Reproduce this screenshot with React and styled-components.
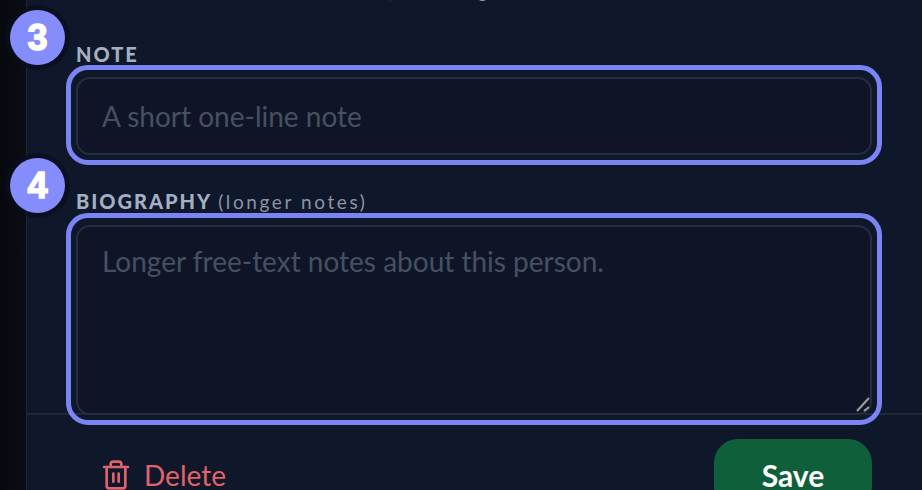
import React from 'react';
import styled, { createGlobalStyle } from 'styled-components';
import { Trash2 } from 'lucide-react';

const GlobalStyle = createGlobalStyle`
  html, body {
    margin: 0;
    height: 100%;
    background: #0f172a;
    overflow: hidden;
  }
  #root {
    height: 100%;
  }
`;

const Page = styled.div`
  display: flex;
  height: 490px;
  overflow: hidden;
  font-family: Lato, "Open Sans", sans-serif;
  color-scheme: dark;
`;

const Backdrop = styled.div`
  width: 26px;
  flex: none;
  background: linear-gradient(90deg, #07090f, #0a0d15);
  border-right: 1px solid #1e2636;
`;

const Panel = styled.main`
  flex: 1;
  display: flex;
  flex-direction: column;
  min-width: 0;
  background: #0f172a;
`;

const Form = styled.div`
  display: flex;
  flex-direction: column;
  padding: 0 50px 0 49px;
`;

const Hint = styled.p`
  margin: -20px 0 0;
  height: 22px;
  font-size: 18px;
  line-height: 22px;
  color: #8a94a6;
  white-space: nowrap;
`;

const Field = styled.div`
  position: relative;
  display: flex;
  flex-direction: column;
  margin-top: ${(p) => p.$top}px;
`;

const Badge = styled.span`
  position: absolute;
  left: -66px;
  top: ${(p) => p.$top}px;
  width: 55px;
  height: 55px;
  border-radius: 50%;
  background: #858cfb;
  box-shadow: 0 0 0 5px rgba(10, 14, 28, 0.7);
  color: #fff;
  font-family: "Liberation Sans", Arial, sans-serif;
  font-size: 36px;
  font-weight: 700;
  -webkit-text-stroke: 1.5px #fff;
  display: flex;
  align-items: center;
  justify-content: center;
  z-index: 2;
`;

const Label = styled.label`
  font-size: 20px;
  line-height: 24px;
  font-weight: 900;
  letter-spacing: 2px;
  color: #a3afc2;
  margin-bottom: ${(p) => p.$gap}px;
`;

const LabelNote = styled.span`
  font-size: 19px;
  font-weight: 400;
  letter-spacing: 2.6px;
  color: #8a94a6;
`;

const Spotlight = styled.div`
  position: relative;
  display: flex;

  &::after {
    content: "";
    position: absolute;
    inset: -12px -10px -10px -10px;
    border: 5px solid #7a85f3;
    border-radius: 22px;
    pointer-events: none;
    z-index: 1;
  }
`;

const controlStyles = `
  width: 100%;
  box-sizing: border-box;
  background: #0f1527;
  border: 2px solid #252d3e;
  border-radius: 14px;
  color: #e2e8f0;
  font-family: Lato, "Open Sans", sans-serif;
  font-size: 28px;
  outline: none;

  &::placeholder {
    color: #465062;
    opacity: 1;
  }
`;

const TextInput = styled.input`
  ${controlStyles}
  height: 78px;
  padding: 0 24px;
`;

const TextArea = styled.textarea`
  ${controlStyles}
  display: block;
  height: 190px;
  padding: 17px 24px;
  resize: none;
`;

const ResizeGrip = styled.svg`
  position: absolute;
  right: 2px;
  bottom: 3px;
  width: 16px;
  height: 16px;
  pointer-events: none;
`;

const Footer = styled.footer`
  display: flex;
  align-items: flex-start;
  justify-content: space-between;
  margin-top: -2px;
  padding: 24px 50px 0 73px;
  border-top: 2px solid #1f2738;
`;

const DeleteButton = styled.button`
  display: flex;
  align-items: center;
  gap: 12px;
  margin-top: 19px;
  padding: 0;
  border: 0;
  background: none;
  color: #e0636b;
  font-family: inherit;
  font-size: 28px;
`;

const SaveButton = styled.button`
  width: 158px;
  height: 72px;
  border: 0;
  border-radius: 24px;
  background: #0f5f3a;
  color: #fff;
  font-family: inherit;
  font-size: 30px;
  font-weight: 700;
`;

export default function App() {
  return (
    <Page>
      <GlobalStyle />
      <Backdrop />
      <Panel>
        <Form>
          <Hint>Shown alone beside the name in the list, when using</Hint>
          <Field $top={40}>
            <Badge $top={-32}>3</Badge>
            <Label $gap={11}>NOTE</Label>
            <Spotlight>
              <TextInput placeholder="A short one-line note" />
            </Spotlight>
          </Field>
          <Field $top={34}>
            <Badge $top={-31}>4</Badge>
            <Label $gap={11}>
              BIOGRAPHY <LabelNote>(longer notes)</LabelNote>
            </Label>
            <Spotlight>
              <TextArea placeholder="Longer free-text notes about this person." />
              <ResizeGrip viewBox="0 0 16 16">
                <path d="M3 15 L15 2 M10 15 L15 11" stroke="#9a9a9a" strokeWidth="2.2" fill="none" />
              </ResizeGrip>
            </Spotlight>
          </Field>
        </Form>
        <Footer>
          <DeleteButton>
            <Trash2 size={32} strokeWidth={2} />
            Delete
          </DeleteButton>
          <SaveButton>Save</SaveButton>
        </Footer>
      </Panel>
    </Page>
  );
}
